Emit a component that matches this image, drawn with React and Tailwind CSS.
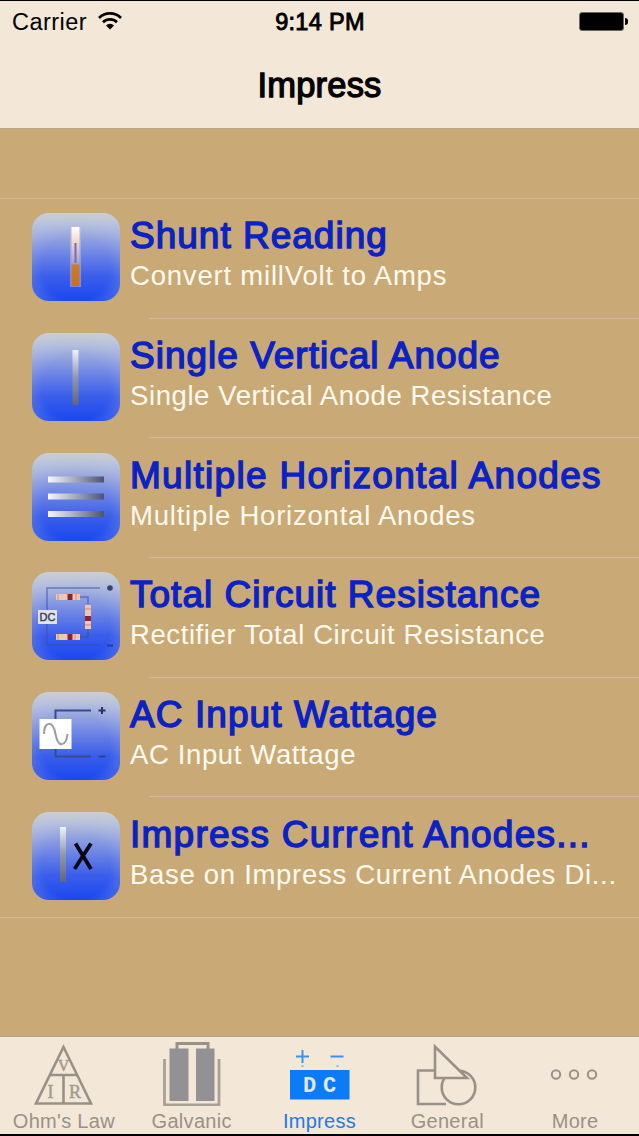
import React from 'react';

function IconBase({ children }) {
	return (
		<svg viewBox="0 0 88 88" className="w-[88px] h-[88px] shrink-0">
			<defs>
				<linearGradient id="tile" x1="0" y1="0" x2="0" y2="1">
					<stop offset="0" stopColor="#cdd0cb" />
					<stop offset="0.12" stopColor="#b5bfdb" />
					<stop offset="0.3" stopColor="#8fa0e0" />
					<stop offset="0.5" stopColor="#667fe6" />
					<stop offset="0.72" stopColor="#3b5eea" />
					<stop offset="1" stopColor="#1a48f0" />
				</linearGradient>
				<radialGradient id="edge" cx="0.5" cy="0.62" r="0.7">
					<stop offset="0.55" stopColor="#c5cce0" stopOpacity="0" />
					<stop offset="1" stopColor="#c5cce0" stopOpacity="0.38" />
				</radialGradient>
				<linearGradient id="rodV" x1="0" y1="0" x2="0" y2="1">
					<stop offset="0" stopColor="#eef2fa" />
					<stop offset="0.5" stopColor="#8f98b0" />
					<stop offset="1" stopColor="#61667c" />
				</linearGradient>
				<linearGradient id="rodH" x1="0" y1="0" x2="1" y2="0">
					<stop offset="0" stopColor="#f6f8fc" />
					<stop offset="0.5" stopColor="#a3a9ba" />
					<stop offset="1" stopColor="#4c5272" />
				</linearGradient>
				<linearGradient id="shunt" x1="0" y1="0" x2="0" y2="1">
					<stop offset="0" stopColor="#ffffff" />
					<stop offset="0.28" stopColor="#f3d3c6" />
					<stop offset="0.63" stopColor="#a79bd0" />
					<stop offset="0.64" stopColor="#cf7a26" />
					<stop offset="1" stopColor="#c87218" />
				</linearGradient>
			</defs>
			<rect width="88" height="88" rx="17" fill="url(#tile)" />
			<rect width="88" height="88" rx="17" fill="url(#edge)" />
			{children}
		</svg>
	);
}

function ShuntIcon() {
	return (
		<IconBase>
			<rect x="38" y="13" width="11" height="61" fill="#b9bfe8" opacity="0.5" />
			<rect x="39.5" y="14" width="8" height="59" fill="url(#shunt)" />
			<path d="M43.5 30v20" stroke="#6a72b8" strokeWidth="2" />
		</IconBase>
	);
}

function VerticalIcon() {
	return (
		<IconBase>
			<rect x="40.5" y="17" width="6" height="55" fill="url(#rodV)" />
		</IconBase>
	);
}

function HorizontalIcon() {
	return (
		<IconBase>
			<rect x="16" y="23.5" width="56" height="6" fill="url(#rodH)" />
			<rect x="16" y="40.5" width="56" height="6" fill="url(#rodH)" />
			<rect x="16" y="58" width="56" height="6" fill="url(#rodH)" />
		</IconBase>
	);
}

function CircuitIcon() {
	return (
		<IconBase>
			<g fill="none" stroke="#3b4fa8" strokeWidth="1.5" opacity="0.6">
				<path d="M68 16H15v57h53" />
				<path d="M48 25h8v7M56 58v7h-8M22 65h4" />
			</g>
			<g fill="#efc6b4">
				<rect x="24" y="22" width="24" height="6" />
				<rect x="24" y="62" width="24" height="6" />
				<rect x="53" y="33" width="6" height="24" />
			</g>
			<g fill="#8a2430">
				<rect x="35.5" y="22" width="5" height="6" />
				<rect x="35.5" y="62" width="5" height="6" />
				<rect x="53" y="44" width="6" height="5" />
			</g>
			<path d="M26 22v6M44 22v6M26 62v6M43 62v6M53 37h6M53 53h6" stroke="#d98c60" strokeWidth="1" />
			<rect x="6" y="38" width="19" height="14" fill="#dfe3ef" />
			<text x="15.5" y="49" textAnchor="middle" fontSize="11" fill="#3c4048" stroke="#3c4048" strokeWidth="0.4" fontFamily="Liberation Sans, sans-serif">DC</text>
			<circle cx="78" cy="16" r="2.8" fill="#33456a" />
			<path d="M75 73.5h6" stroke="#263c9c" strokeWidth="2" />
		</IconBase>
	);
}

function AcIcon() {
	return (
		<IconBase>
			<path d="M59 18.5H23.5v46H59" fill="none" stroke="#3a4a90" strokeWidth="2" />
			<rect x="7.5" y="27" width="32" height="30" fill="#fff" />
			<path d="M12 42c0-13 9-14 11.5 0s10.500 13 12 0" fill="none" stroke="#9a9a9a" strokeWidth="2" />
			<path d="M66.5 18.5h7M70 15v7" stroke="#26376e" strokeWidth="2" />
			<path d="M66.5 64.5h7" stroke="#2a40a0" strokeWidth="2" />
		</IconBase>
	);
}

function CurrentIcon() {
	return (
		<IconBase>
			<rect x="28" y="15" width="6" height="55" fill="url(#rodV)" />
			<path d="M43.500 31.500L59 57M59 31.500L42.500 57" fill="none" stroke="#050914" strokeWidth="3.800" />
		</IconBase>
	);
}

function OhmIcon() {
	return (
		<svg viewBox="0 0 64 64" className="w-16 h-16">
			<path d="M31.500 5L59 61.500H4zM18 33h27M31.500 33v28" fill="none" stroke="#999187" strokeWidth="2.600" />
			<g fill="#a39b91" fontSize="18" textAnchor="middle" fontFamily="Liberation Serif, serif" stroke="#a39b91" strokeWidth="0.5">
				<text x="31.500" y="29" fontSize="16">V</text>
				<text x="18.500" y="56">I</text>
				<text x="43" y="56">R</text>
			</g>
		</svg>
	);
}

function GalvanicIcon() {
	return (
		<svg viewBox="0 0 64 64" className="w-16 h-16">
			<path d="M4.500 17v46h54.500V17" fill="none" stroke="#aaa196" strokeWidth="2.800" />
			<path d="M17 7V1.500h31V7" fill="none" stroke="#999187" strokeWidth="3" />
			<path d="M9.500 6.500h19V59h-19zM36 6.500h18.500V59H36z" fill="#929193" />
		</svg>
	);
}

function ImpressIcon() {
	return (
		<svg viewBox="0 0 64 64" className="w-16 h-16">
			<path d="M9 14.500h13M15.500 8v13M43.500 14.500h13" stroke="#3a91ee" strokeWidth="2" />
			<path d="M15.500 23v2M50.500 23v2" stroke="#8dbbea" strokeWidth="2" />
			<path d="M3 28h59.500v29.500H3z" fill="#0a7cf8" />
			<g fill="#e4e8ea" fontSize="22" fontWeight="bold" textAnchor="middle" fontFamily="Liberation Mono, monospace">
				<text x="22.500" y="50">D</text>
				<text x="42.500" y="50">C</text>
			</g>
		</svg>
	);
}

function GeneralIcon() {
	return (
		<svg viewBox="0 0 64 64" className="w-16 h-16">
			<g fill="none" stroke="#999187" strokeWidth="2.600">
				<path d="M20 28.500H3v33.500H31" />
				<circle cx="43.500" cy="45.500" r="16.800" fill="#f3e8d7" />
				<path d="M20 4.500V36h32z" fill="#f3e8d7" />
			</g>
		</svg>
	);
}

function MoreIcon() {
	return (
		<svg viewBox="0 0 64 64" className="w-16 h-16">
			<g fill="none" stroke="#999187" strokeWidth="2">
				<circle cx="13" cy="32.500" r="4.200" />
				<circle cx="31" cy="32.500" r="4.200" />
				<circle cx="49" cy="32.500" r="4.200" />
			</g>
		</svg>
	);
}

const items = [
	{
		title: 'Shunt Reading',
		titleClass: 'tracking-[1px]',
		detail: 'Convert millVolt to Amps',
		detailClass: 'tracking-[0.8px]',
		Icon: ShuntIcon
	},
	{
		title: 'Single Vertical Anode',
		titleClass: 'tracking-[1px]',
		detail: 'Single Vertical Anode Resistance',
		detailClass: 'tracking-[0.59px]',
		Icon: VerticalIcon
	},
	{
		title: 'Multiple Horizontal Anodes',
		titleClass: 'tracking-[1.3px]',
		detail: 'Multiple Horizontal Anodes',
		detailClass: 'tracking-[0.78px]',
		Icon: HorizontalIcon
	},
	{
		title: 'Total Circuit Resistance',
		titleClass: 'tracking-[1.02px]',
		detail: 'Rectifier Total Circuit Resistance',
		detailClass: 'tracking-[0.59px]',
		Icon: CircuitIcon
	},
	{
		title: 'AC Input Wattage',
		titleClass: 'tracking-[1.08px]',
		detail: 'AC Input Wattage',
		detailClass: 'tracking-[0.63px]',
		Icon: AcIcon
	},
	{
		title: 'Impress Current Anodes...',
		titleClass: 'tracking-[1.24px]',
		detail: 'Base on Impress Current Anodes Di...',
		detailClass: 'tracking-[0.7px]',
		Icon: CurrentIcon
	}
];

const tabs = [
	{ label: "Ohm's Law", Icon: OhmIcon },
	{ label: 'Galvanic', Icon: GalvanicIcon },
	{ label: 'Impress', Icon: ImpressIcon, active: true },
	{ label: 'General', Icon: GeneralIcon },
	{ label: 'More', Icon: MoreIcon }
];

function StatusBar() {
	return (
		<div className="grid grid-cols-3 items-center h-[43px] pl-[12px] pr-[11px] text-[23.5px] leading-none">
			<div className="flex items-center gap-[11px]">
				<span className="tracking-[0.45px]">Carrier</span>
				<svg viewBox="0 0 24 18" className="w-6 h-[18px] -mt-[4px]">
					<g fill="none" stroke="#000" strokeWidth="2.600">
						<path d="M1 6a15.500 15.500 0 0 1 22 0" />
						<path d="M5 10.200a10 10 0 0 1 14 0" />
					</g>
					<path d="M12 17.500L8 13.500a5.700 5.700 0 0 1 8 0z" />
				</svg>
			</div>
			<span className="text-center tracking-[0.3px] [-webkit-text-stroke:0.9px_#000]">9:14 PM</span>
			<div className="flex items-center justify-end gap-px -mt-[2px]">
				<div className="w-[45px] h-[19px] rounded-[3px] border border-[#6d675f] bg-black" />
				<div className="w-[3px] h-[7px] rounded-r-full bg-black" />
			</div>
		</div>
	);
}

function Row({ item, last }) {
	const { title, titleClass, detail, detailClass, Icon } = item;
	return (
		<li className="relative flex h-[119.7px] pl-8 pt-[14.2px]">
			<Icon />
			<div className="pl-[10px] pt-px whitespace-nowrap">
				<p className={`text-[37px] leading-[44px] text-[#0b22c4] [-webkit-text-stroke:1.4px_#0b22c4] ${titleClass}`}>{title}</p>
				<p className={`text-[27.5px] leading-[36px] text-[#fffaf0] ${detailClass}`}>{detail}</p>
			</div>
			{!last && <div className="absolute bottom-0 right-0 left-[149px] h-px bg-[#cdbba2]" />}
		</li>
	);
}

function App() {
	return (
		<div className="flex flex-col w-[639px] h-[1136px] overflow-hidden bg-[#c9aa76] border-t border-b-2 border-black text-black font-['Liberation_Sans',Arial,sans-serif]">
			<header className="h-[128px] shrink-0 bg-[#f3e8d7] border-b border-[#b5a78f]">
				<StatusBar />
				<h1 className="text-center text-[34.5px] leading-[82px] tracking-[0.2px] [-webkit-text-stroke:1.3px_#000]">Impress</h1>
			</header>
			<main className="flex-1 pt-[69px]">
				<ul className="border-y border-[#cdbb96]">
					{items.map((item, i) => (
						<Row key={item.title} item={item} last={i === items.length - 1} />
					))}
				</ul>
			</main>
			<nav className="grid grid-cols-5 h-[98px] shrink-0 pt-[5px] bg-[#f3e8d7] border-t border-[#b3a38c]">
				{tabs.map(({ label, Icon, active }) => (
					<div key={label} className={`flex flex-col items-center ${active ? 'text-[#2379e2]' : 'text-[#999187]'}`}>
						<Icon />
						<span className="pt-[3px] text-[20px] leading-[25px] tracking-[0.3px]">{label}</span>
					</div>
				))}
			</nav>
		</div>
	);
}

export default App;
